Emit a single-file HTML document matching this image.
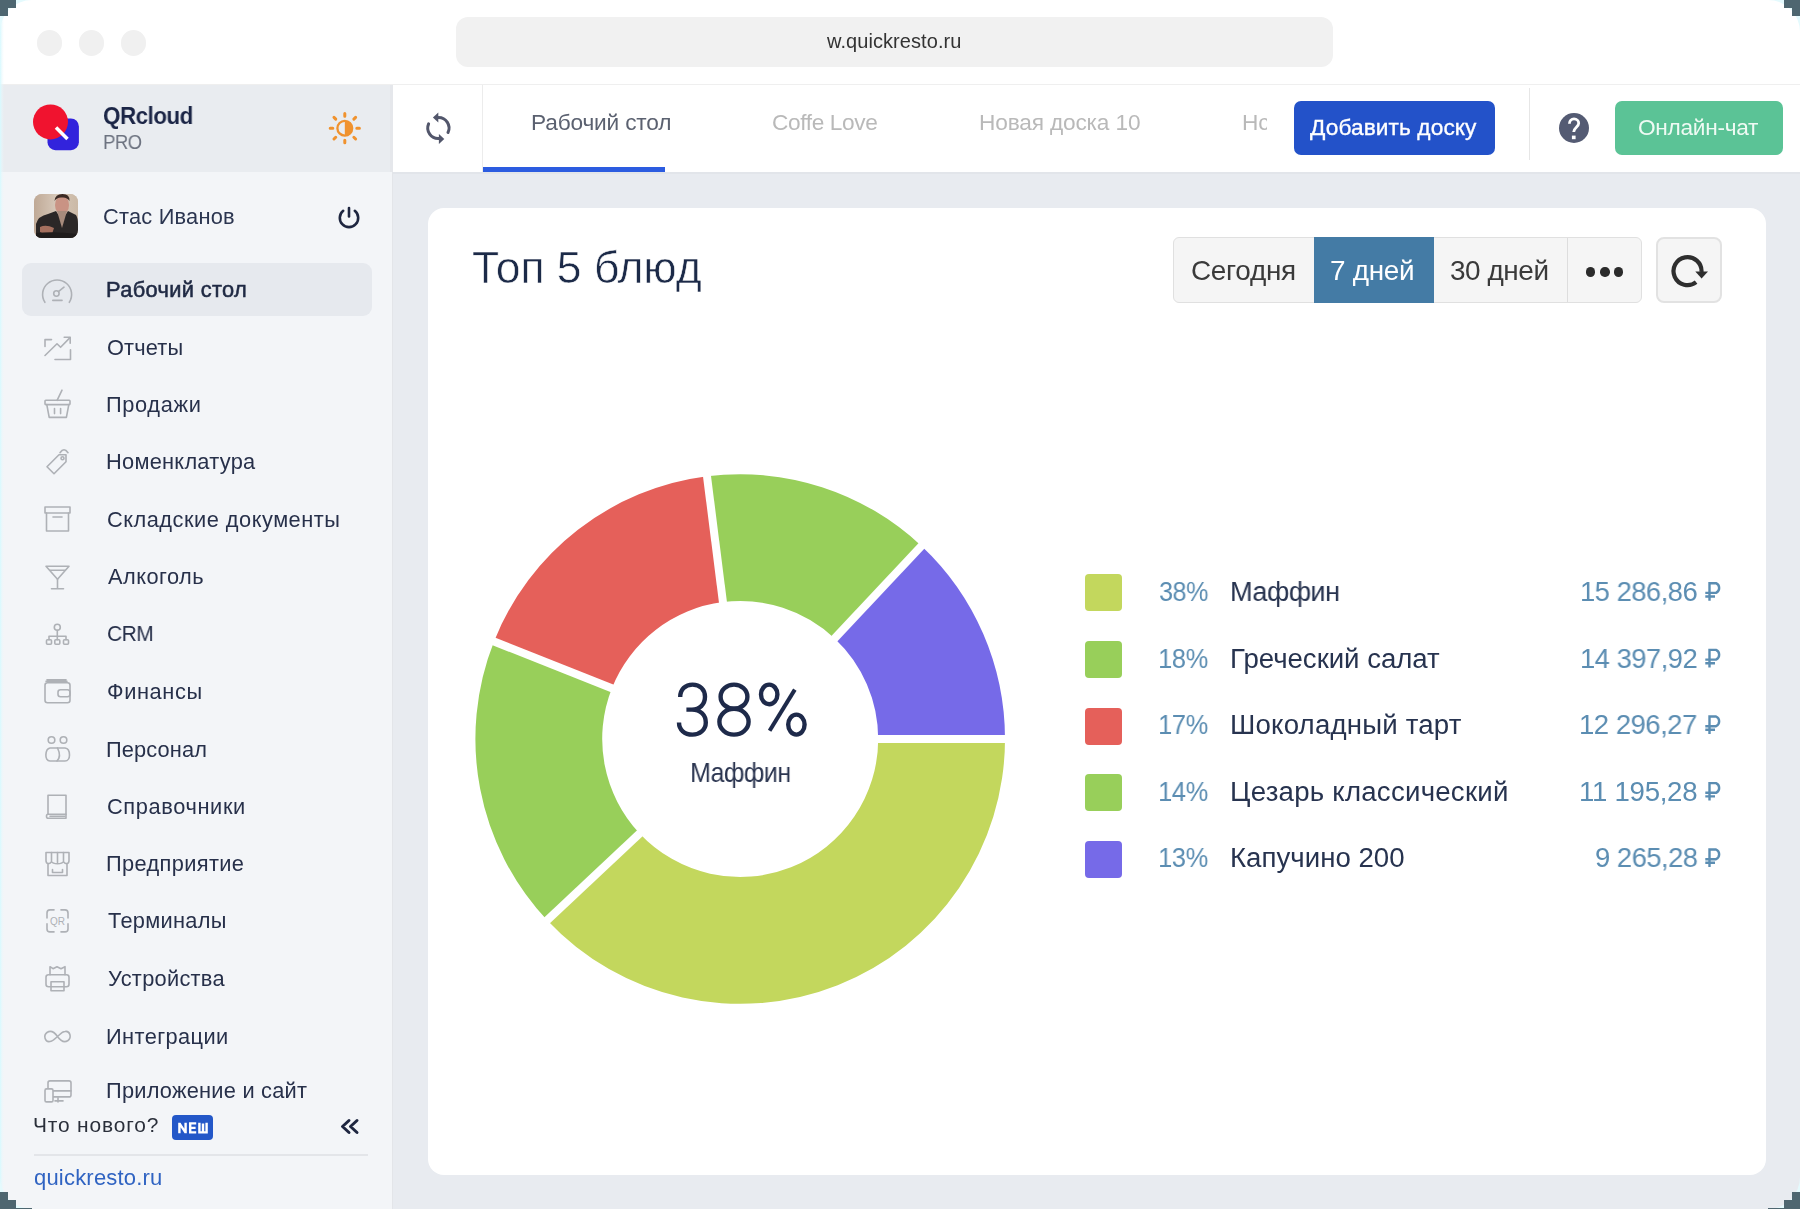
<!DOCTYPE html>
<html><head><meta charset="utf-8">
<style>
html,body{margin:0;padding:0;}
body{width:1800px;height:1209px;overflow:hidden;position:relative;background:#ffffff;font-family:"Liberation Sans",sans-serif;}
.abs{position:absolute;}
.tx{position:absolute;white-space:nowrap;line-height:1;will-change:transform;}
.big{-webkit-text-stroke:2px #ffffff;paint-order:normal;}
</style></head><body>
<!-- chrome -->
<div class="abs" style="left:0;top:0;width:1800px;height:85px;background:#ffffff;"></div>
<div class="abs" style="left:0;top:84px;width:1800px;height:1px;background:#efefef;"></div>
<div class="abs" style="left:36.7px;top:30px;width:25.6px;height:25.6px;border-radius:50%;background:#f0f0f0;"></div>
<div class="abs" style="left:78.9px;top:30px;width:25.6px;height:25.6px;border-radius:50%;background:#f0f0f0;"></div>
<div class="abs" style="left:120.9px;top:30px;width:25.6px;height:25.6px;border-radius:50%;background:#f0f0f0;"></div>
<div class="abs" style="left:456px;top:17px;width:877px;height:50px;border-radius:12px;background:#f1f1f1;"></div>
<!-- sidebar -->
<div class="abs" style="left:0;top:85px;width:393px;height:87px;background:#e9ecf0;"></div>
<div class="abs" style="left:0;top:172px;width:392px;height:1037px;background:#f3f5f8;"></div>
<div class="abs" style="left:392px;top:172px;width:2px;height:1037px;background:#e3e5e9;"></div>
<div class="abs" style="left:390px;top:85px;width:3px;height:87px;background:#e5e7eb;"></div>
<!-- logo -->
<svg class="abs" style="left:0;top:85px" width="393" height="87">
 <rect x="47.5" y="33.5" width="31.4" height="31.7" rx="8" fill="#3223dc"/>
 <circle cx="50.5" cy="36.9" r="17.5" fill="#f0132f"/>
 <line x1="56" y1="42.5" x2="67.5" y2="54" stroke="#ffffff" stroke-width="3.6"/>
</svg>
<!-- sun -->
<svg class="abs" style="left:0;top:0" width="393" height="200" stroke="#f0922e" stroke-linecap="round">
 <circle cx="344.8" cy="128.2" r="7.4" fill="none" stroke-width="2.3"/>
 <path d="M344.8 120.8 A7.4 7.4 0 0 1 344.8 135.6 Z" fill="#f0922e" stroke="none"/>
 <path d="M356.80 128.20 L359.40 128.20 M353.85 137.25 L355.62 139.02 M344.80 140.20 L344.80 142.80 M335.75 137.25 L333.98 139.02 M332.80 128.20 L330.20 128.20 M335.75 119.15 L333.98 117.38 M344.80 116.20 L344.80 113.60 M353.85 119.15 L355.62 117.38" stroke-width="3"/>
</svg>
<!-- avatar -->
<div class="abs" style="left:34px;top:194px;width:44px;height:44px;border-radius:8px;overflow:hidden;background:#cdbcab;">
<svg width="44" height="44" style="display:block">
 <defs><linearGradient id="avbg" x1="0" y1="0" x2="1" y2="0"><stop offset="0" stop-color="#bfa996"/><stop offset="0.5" stop-color="#d6c7b8"/><stop offset="1" stop-color="#cbb9a6"/></linearGradient></defs>
 <rect width="44" height="44" fill="url(#avbg)"/>
 <ellipse cx="28" cy="11" rx="7" ry="9.5" fill="#c99384"/>
 <path d="M20.5 7 Q21 0 28.5 0 Q36 0 35.5 7 Q33 3 28 3.5 Q23 3 20.5 7 Z" fill="#3b2a24"/>
 <path d="M2 44 V30 Q4 22 14 20 L22 17 L28 26 L34 17 L42 21 Q44 24 44 30 V44 Z" fill="#2b2727"/>
 <path d="M23 17 L33 17 L28 34 Z" fill="#a88b7c"/>
 <path d="M6 33 Q12 30 20 34 L18 40 Q10 41 6 38 Z" fill="#a5705f"/>
 <path d="M2 44 V39 Q20 37 44 40 V44 Z" fill="#1f1c1c"/>
</svg>
</div>
<!-- power -->
<svg class="abs" style="left:0;top:0" width="393" height="260" fill="none" stroke="#1e2640" stroke-width="2.6" stroke-linecap="round">
 <path d="M343.2 210.8 A9.2 9.2 0 1 0 354.8 210.8"/>
 <path d="M349 208 V216.5"/>
</svg>
<!-- active item -->
<div class="abs" style="left:22.4px;top:263px;width:349.2px;height:53.4px;border-radius:9px;background:#e6e9ee;"></div>
<svg class="abs" style="left:0;top:0" width="393" height="1209" fill="none" stroke="#aeb1b6" stroke-width="1.6" stroke-linecap="round" stroke-linejoin="round"><path d="M44.9 302.3 A14.5 14.5 0 1 1 69.3 302.3" fill="none"/><circle cx="56.4" cy="293.5" r="2.7" fill="none"/><path d="M58.4 291.6 L64 287.2"/><path d="M52.8 300.4 H62"/><path d="M45 346.4 V339.6 H51.5"/><path d="M55 359.5 H70.5 V349.8"/><path d="M45 355.5 L57 343.8 L60.6 347.3 L70 337.6"/><path d="M64.2 337.2 H70.2 V343.2"/><rect x="45" y="400.3" width="25" height="4.3" rx="0.8" fill="none"/><path d="M46.8 404.6 L49.2 417.4 H66.4 L68.8 404.6"/><path d="M54.5 408.6 V413.6 M60.6 408.6 V413.6"/><path d="M57.1 400.3 L62 390.2"/><path d="M47 466.7 L59 454.7 L66 454.7 L66 461.7 L54 473.7 Z" fill="none" transform="rotate(0)"/><circle cx="62.5" cy="458.2" r="1.5" fill="none"/><path d="M60 452.7 Q64 446.7 68 452.7"/><rect x="45" y="507.0" width="25" height="6" fill="none"/><path d="M46.5 513.0 V531.0 H68.5 V513.0"/><path d="M53 517.0 H62"/><path d="M46 566.3 H69 L57.5 579.3 Z" fill="none"/><path d="M50 570.3 H65"/><path d="M57.5 579.3 V588.3 M51.5 588.8 H63.5"/><circle cx="57.3" cy="627.3" r="3" fill="none"/><path d="M57.3 630.3 V636.3 M49 639.8 V636.3 H66 V639.8 M57.3 636.3 V639.8"/><rect x="46.5" y="639.8" width="5" height="4.5" rx="1" fill="none"/><rect x="54.8" y="639.8" width="5" height="4.5" rx="1" fill="none"/><rect x="63.5" y="639.8" width="5" height="4.5" rx="1" fill="none"/><rect x="45" y="682.7" width="25" height="20" rx="2.5" fill="none"/><path d="M47 679.7 H66 M46 681.2 H67"/><rect x="58" y="689.7" width="12" height="7" rx="2.5" fill="none"/><circle cx="51.5" cy="740.0" r="3.3" fill="none"/><circle cx="63.5" cy="740.0" r="3.3" fill="none"/><path d="M50 761.0 C44 761.0 45 749.0 50 748.0 H65 C71 749.0 71 761.0 65 761.0 Z" fill="none"/><path d="M57.5 748.0 C60 753.0 60 758.0 57 761.0"/><path d="M48 814.3 V795.3 H66 V814.3 Z" fill="none"/><path d="M48 814.3 C46 814.3 46 818.3 48 818.3 H66 V814.3" fill="none"/><path d="M50 816.3 H65"/><path d="M46 852.5 H69 V860.5 C69 864.5 65 864.5 63.5 861.5 C62 864.5 53 864.5 51.5 861.5 C50 864.5 46 864.5 46 860.5 Z" fill="none"/><path d="M51.5 852.5 V860.5 M57.5 852.5 V862.5 M63.5 852.5 V860.5"/><path d="M48 864.5 V875.5 H67 V864.5"/><path d="M52.5 869.5 V872.5 H62.5 V869.5"/><path d="M47 917.9 V912.9 Q47 909.9 50 909.9 H54 M61 909.9 H65 Q68 909.9 68 912.9 V917.9 M68 923.9 V928.9 Q68 931.9 65 931.9 H61 M54 931.9 H50 Q47 931.9 47 928.9 V923.9"/><text x="57.5" y="924.9" font-size="10" text-anchor="middle" fill="#aeb1b6" stroke="none" font-family="Liberation Sans">QR</text><path d="M50 974.7 V966.7 L53 968.7 L57 966.7 L61 968.7 L65 966.7 V974.7" fill="none"/><rect x="46" y="974.7" width="23" height="12" rx="2.5" fill="none"/><rect x="51" y="981.7" width="13" height="9" fill="none"/><path d="M57.5 1036.5 C54 1031.5 50 1030.5 47 1032.5 C43 1035.5 45 1042.5 50 1041.5 C53 1041.5 55 1038.5 57.5 1036.5 C60 1034.5 62 1031.5 65 1031.5 C70 1030.5 72 1037.5 68 1040.5 C65 1042.5 61 1041.5 57.5 1036.5 Z" fill="none"/><rect x="48" y="1080.9" width="23" height="16" rx="2" fill="none"/><path d="M50 1090.9 H71"/><rect x="45" y="1088.9" width="8" height="13" rx="1.5" fill="#f3f5f8"/><path d="M55 1100.9 H63 M58 1097.9 V1101.9"/></svg>
<!-- NEW badge -->
<div class="abs" style="left:172.4px;top:1115px;width:40.6px;height:24.6px;border-radius:4px;background:#2357c8;"></div>
<svg class="abs" style="left:0;top:0" width="393" height="1209" fill="none" stroke="#ffffff" stroke-width="2.4" stroke-linejoin="miter">
 <path d="M179.4 1133.2 V1122.8 M179.6 1123.6 L185.4 1132.4 M185.6 1133.2 V1122.8" stroke-linejoin="bevel"/>
 <path d="M196.2 1123.4 H190.2 V1132.4 H196.2 M190.2 1127.9 H195.6"/>
 <path d="M199.4 1122.8 V1132.4 H206.6 V1122.8 M203 1123.5 V1132.4"/>
</svg>
<svg class="abs" style="left:0;top:0" width="393" height="1209" fill="none" stroke="#1e2640" stroke-width="3" stroke-linecap="round" stroke-linejoin="round">
 <path d="M349 1120.5 L342.5 1126.5 L349 1132.5 M357 1120.5 L350.5 1126.5 L357 1132.5"/>
</svg>
<div class="abs" style="left:34px;top:1154px;width:334px;height:2px;background:#e3e5e9;"></div>
<!-- top nav -->
<div class="abs" style="left:393px;top:85px;width:1407px;height:87px;background:#ffffff;"></div>
<div class="abs" style="left:482px;top:85px;width:1px;height:87px;background:#ececec;"></div>
<div class="abs" style="left:483px;top:167px;width:182px;height:5px;background:#2c5ce0;"></div>
<svg class="abs" style="left:393px;top:85px" width="89" height="87" fill="none" stroke="#52566b" stroke-width="3" stroke-linecap="round">
 <path d="M45.5 32.5 A10.5 10.5 0 0 1 55 47.5"/>
 <path d="M35.6 38.9 A10.5 10.5 0 0 0 46 53.5"/>
 <path d="M39.9 32.6 L45.3 27.6 L45.3 37.6 Z" fill="#52566b" stroke="none"/>
 <path d="M51.3 54 L45.9 49 L45.9 59 Z" fill="#52566b" stroke="none"/>
</svg>
<div class="abs" style="left:1294px;top:101.3px;width:200.5px;height:53.7px;border-radius:7px;background:#2352c9;"></div>
<div class="abs" style="left:1529px;top:88px;width:1px;height:72px;background:#e6e6e6;"></div>
<div class="abs" style="left:1558.8px;top:113.1px;width:30.4px;height:30.4px;border-radius:50%;background:#545b73;"></div>
<svg class="abs" style="left:0;top:0" width="1800" height="200" fill="none" stroke="#ffffff" stroke-width="2.8">
 <path d="M1569.4 123.8 C1569.4 120.6 1571.5 118.9 1574 118.9 C1576.8 118.9 1578.7 120.8 1578.7 123.2 C1578.7 126.9 1573.7 127.6 1573.7 132"/>
 <rect x="1571.9" y="135.6" width="3.7" height="3.6" fill="#ffffff" stroke="none"/>
</svg>
<div class="abs" style="left:1614.8px;top:101.3px;width:168.3px;height:53.7px;border-radius:7px;background:#5bc396;"></div>
<div class="abs" style="left:1268px;top:100px;width:20px;height:50px;background:#ffffff;"></div>
<!-- main -->
<div class="abs" style="left:393px;top:172px;width:1407px;height:1037px;background:#e8ebf0;"></div>
<div class="abs" style="left:393px;top:172px;width:1407px;height:2px;background:#e2e5ea;"></div>
<div class="abs" style="left:427.7px;top:208px;width:1338.6px;height:966.8px;border-radius:16px;background:#ffffff;"></div>
<!-- segmented -->
<div class="abs" style="left:1172.5px;top:237px;width:469.7px;height:66px;border-radius:6px;background:#f5f5f5;box-sizing:border-box;border:1.5px solid #e0e0e0;"></div>
<div class="abs" style="left:1314.2px;top:237px;width:119.5px;height:66px;background:#447ba5;"></div>
<div class="abs" style="left:1567px;top:238px;width:1px;height:64px;background:#dddddd;"></div>
<div class="abs" style="left:1586px;top:267.4px;width:9.4px;height:9.4px;border-radius:50%;background:#2b2b2b;"></div>
<div class="abs" style="left:1600.2px;top:267.4px;width:9.4px;height:9.4px;border-radius:50%;background:#2b2b2b;"></div>
<div class="abs" style="left:1614.1px;top:267.4px;width:9.4px;height:9.4px;border-radius:50%;background:#2b2b2b;"></div>
<div class="abs" style="left:1656.4px;top:237.4px;width:65.4px;height:65.2px;border-radius:8px;background:#f5f5f5;box-sizing:border-box;border:2px solid #e2e2e2;"></div>
<svg class="abs" style="left:1656px;top:237px" width="66" height="66" fill="none" stroke="#2e2e2e" stroke-width="4.2">
 <path d="M45.5 35 A14 14 0 1 0 40.1 45.2"/>
 <path d="M39.3 34.4 H52 L45.6 41.6 Z" fill="#2e2e2e" stroke="none"/>
</svg>
<svg class="abs" style="left:0;top:0" width="1800" height="1209"><path d="M1005.00 739.00 A264.8 264.8 0 0 1 547.17 920.27 L639.60 833.47 A138.0 138.0 0 0 0 878.20 739.00 Z" fill="#c3d75d"/><path d="M547.17 920.27 A264.8 264.8 0 0 1 494.00 641.52 L611.89 688.20 A138.0 138.0 0 0 0 639.60 833.47 Z" fill="#98cf5a"/><path d="M494.00 641.52 A264.8 264.8 0 0 1 707.01 476.29 L722.90 602.09 A138.0 138.0 0 0 0 611.89 688.20 Z" fill="#e5605a"/><path d="M707.01 476.29 A264.8 264.8 0 0 1 921.47 545.97 L834.67 638.40 A138.0 138.0 0 0 0 722.90 602.09 Z" fill="#98cf5a"/><path d="M921.47 545.97 A264.8 264.8 0 0 1 1005.00 739.00 L878.20 739.00 A138.0 138.0 0 0 0 834.67 638.40 Z" fill="#766ae8"/><line x1="874.20" y1="739.00" x2="1009.00" y2="739.00" stroke="#fff" stroke-width="8"/><line x1="642.52" y1="830.73" x2="544.25" y2="923.01" stroke="#fff" stroke-width="8"/><line x1="615.61" y1="689.67" x2="490.28" y2="640.05" stroke="#fff" stroke-width="8"/><line x1="723.41" y1="606.06" x2="706.51" y2="472.32" stroke="#fff" stroke-width="8"/><line x1="831.93" y1="641.32" x2="924.21" y2="543.05" stroke="#fff" stroke-width="8"/></svg>
<svg class="abs" style="left:0;top:0" width="1800" height="1209"><path d="M1709.5 600.7 V583.2 H1716 A5.3 5.3 0 0 1 1716 592.9 H1705.3 M1705.3 596.5 H1715" fill="none" stroke="#5b8db2" stroke-width="2.4"/><path d="M1709.5 667.4 V649.9 H1716 A5.3 5.3 0 0 1 1716 659.6 H1705.3 M1705.3 663.2 H1715" fill="none" stroke="#5b8db2" stroke-width="2.4"/><path d="M1709.5 734.0 V716.5 H1716 A5.3 5.3 0 0 1 1716 726.2 H1705.3 M1705.3 729.8 H1715" fill="none" stroke="#5b8db2" stroke-width="2.4"/><path d="M1709.5 800.6 V783.1 H1716 A5.3 5.3 0 0 1 1716 792.8 H1705.3 M1705.3 796.4 H1715" fill="none" stroke="#5b8db2" stroke-width="2.4"/><path d="M1709.5 867.0 V849.5 H1716 A5.3 5.3 0 0 1 1716 859.2 H1705.3 M1705.3 862.8 H1715" fill="none" stroke="#5b8db2" stroke-width="2.4"/></svg>
<svg class="abs" style="left:0;top:0" width="1000" height="1000" fill="none" stroke="#1e2a4a" stroke-width="4.4">
 <path d="M680.2 697 C680.2 689 685.5 684.6 692.5 684.6 C700 684.6 705 689.5 705 696.8 C705 704.5 699.5 709.6 692 709.6 L686.4 709.6 M692 709.6 C700.5 709.6 705.8 715 705.8 722.5 C705.8 730 699.5 734.6 692.5 734.6 C684.5 734.6 679 729.8 679 722.5"/>
 <ellipse cx="734" cy="696.7" rx="13.4" ry="12.1"/>
 <ellipse cx="734" cy="721.7" rx="14.6" ry="12.9"/>
 <ellipse cx="769.2" cy="694.4" rx="8.2" ry="9.8"/>
 <ellipse cx="796.4" cy="724.6" rx="8.2" ry="10"/>
 <path d="M794.8 689.6 L769.6 730.8" stroke-width="4"/>
</svg>
<!-- legend squares -->
<div class="abs" style="left:1084.8px;top:574px;width:37px;height:37px;border-radius:4px;background:#c3d75d;"></div>
<div class="abs" style="left:1084.8px;top:640.9px;width:37px;height:37px;border-radius:4px;background:#98cf5a;"></div>
<div class="abs" style="left:1084.8px;top:707.5px;width:37px;height:37px;border-radius:4px;background:#e5605a;"></div>
<div class="abs" style="left:1084.8px;top:774.1px;width:37px;height:37px;border-radius:4px;background:#98cf5a;"></div>
<div class="abs" style="left:1084.8px;top:840.5px;width:37px;height:37px;border-radius:4px;background:#766ae8;"></div>
<div class="tx" style="left:827.10px;top:31.17px;font-size:20.00px;letter-spacing:0.074px;color:#333333;">w.quickresto.ru</div>
<div class="tx" style="left:102.90px;top:104.09px;font-size:23.98px;letter-spacing:-0.500px;color:#1b2546;font-weight:bold;transform:scaleX(0.9315);transform-origin:0.90px 0;">QRcloud</div>
<div class="tx" style="left:103.20px;top:132.81px;font-size:19.48px;letter-spacing:-0.500px;color:#6d7380;transform:scaleX(0.9471);transform-origin:1.50px 0;">PRO</div>
<div class="tx" style="left:102.90px;top:206.04px;font-size:21.80px;letter-spacing:0.214px;color:#2b3550;">Стас Иванов</div>
<div class="tx" style="left:106.30px;top:279.04px;font-size:21.80px;letter-spacing:0.351px;color:#1f2943;-webkit-text-stroke:0.55px #1f2943;">Рабочий стол</div>
<div class="tx" style="left:107.00px;top:336.74px;font-size:21.80px;letter-spacing:0.142px;color:#27304a;">Отчеты</div>
<div class="tx" style="left:106.30px;top:393.84px;font-size:21.80px;letter-spacing:0.638px;color:#27304a;">Продажи</div>
<div class="tx" style="left:106.30px;top:451.24px;font-size:21.80px;letter-spacing:0.265px;color:#27304a;">Номенклатура</div>
<div class="tx" style="left:106.90px;top:508.54px;font-size:21.80px;letter-spacing:0.499px;color:#27304a;">Складские документы</div>
<div class="tx" style="left:108.00px;top:565.84px;font-size:21.80px;letter-spacing:0.470px;color:#27304a;">Алкоголь</div>
<div class="tx" style="left:106.90px;top:623.34px;font-size:21.80px;letter-spacing:-0.500px;color:#27304a;transform:scaleX(0.9588);transform-origin:1.10px 0;">CRM</div>
<div class="tx" style="left:106.80px;top:681.24px;font-size:21.80px;letter-spacing:0.590px;color:#27304a;">Финансы</div>
<div class="tx" style="left:106.30px;top:738.54px;font-size:21.80px;letter-spacing:0.135px;color:#27304a;">Персонал</div>
<div class="tx" style="left:106.90px;top:795.84px;font-size:21.80px;letter-spacing:0.620px;color:#27304a;">Справочники</div>
<div class="tx" style="left:106.30px;top:853.04px;font-size:21.80px;letter-spacing:0.356px;color:#27304a;">Предприятие</div>
<div class="tx" style="left:107.60px;top:910.44px;font-size:21.80px;letter-spacing:0.288px;color:#27304a;">Терминалы</div>
<div class="tx" style="left:107.50px;top:968.24px;font-size:21.80px;letter-spacing:0.286px;color:#27304a;">Устройства</div>
<div class="tx" style="left:106.30px;top:1026.04px;font-size:21.80px;letter-spacing:0.395px;color:#27304a;">Интеграции</div>
<div class="tx" style="left:106.30px;top:1080.44px;font-size:21.80px;letter-spacing:0.227px;color:#27304a;">Приложение и сайт</div>
<div class="tx" style="left:33.40px;top:1115.18px;font-size:20.93px;letter-spacing:0.841px;color:#2a2f3a;">Что нового?</div>
<div class="tx" style="left:34.10px;top:1166.87px;font-size:22.00px;letter-spacing:0.199px;color:#2f63c2;">quickresto.ru</div>
<div class="tx" style="left:531.30px;top:111.30px;font-size:22.67px;letter-spacing:-0.164px;color:#5b6170;">Рабочий стол</div>
<div class="tx" style="left:772.20px;top:111.30px;font-size:22.67px;letter-spacing:-0.371px;color:#b9b9b9;">Coffe Love</div>
<div class="tx" style="left:978.60px;top:111.20px;font-size:22.67px;letter-spacing:-0.160px;color:#b9b9b9;">Новая доска 10</div>
<div class="tx" style="left:1241.50px;top:111.20px;font-size:22.67px;letter-spacing:0.000px;color:#b9b9b9;width:24.5px;overflow:hidden;height:26px;">Нс</div>
<div class="tx" style="left:1310.20px;top:115.80px;font-size:22.67px;letter-spacing:0.104px;color:#ffffff;-webkit-text-stroke:0.35px #ffffff;">Добавить доску</div>
<div class="tx" style="left:1637.90px;top:116.10px;font-size:22.67px;letter-spacing:-0.273px;color:#eefaf3;">Онлайн-чат</div>
<div class="tx" style="left:472.01px;top:246.14px;font-size:44.48px;letter-spacing:0.001px;color:#1c2a48;-webkit-text-stroke:0.6px #ffffff;">Топ 5 блюд</div>
<div class="tx" style="left:1190.69px;top:256.77px;font-size:27.91px;letter-spacing:-0.309px;color:#3a3a3a;">Сегодня</div>
<div class="tx" style="left:1330.39px;top:256.77px;font-size:27.91px;letter-spacing:-0.307px;color:#ffffff;">7 дней</div>
<div class="tx" style="left:1450.23px;top:256.77px;font-size:27.91px;letter-spacing:-0.432px;color:#3a3a3a;">30 дней</div>
<div class="tx" style="left:690.19px;top:760.21px;font-size:27.04px;letter-spacing:-0.500px;color:#2b3550;transform:scaleX(0.9185);transform-origin:2.11px 0;">Маффин</div>
<div class="tx" style="left:1159.34px;top:577.82px;font-size:27.62px;letter-spacing:-0.500px;color:#5b8db2;transform:scaleX(0.9090);transform-origin:0.86px 0;">38%</div>
<div class="tx" style="left:1229.54px;top:577.82px;font-size:27.62px;letter-spacing:-0.500px;color:#27334f;transform:scaleX(0.9800);transform-origin:2.16px 0;">Маффин</div>
<div class="tx amt" style="left:1580.07px;top:577.82px;font-size:27.62px;letter-spacing:-0.500px;color:#5b8db2;transform:scaleX(0.9904);transform-origin:1.73px 0;">15 286,86</div>
<div class="tx" style="left:1158.47px;top:644.52px;font-size:27.62px;letter-spacing:-0.500px;color:#5b8db2;transform:scaleX(0.9241);transform-origin:1.73px 0;">18%</div>
<div class="tx" style="left:1229.54px;top:644.52px;font-size:27.62px;letter-spacing:-0.018px;color:#27334f;">Греческий салат</div>
<div class="tx amt" style="left:1580.07px;top:644.52px;font-size:27.62px;letter-spacing:-0.500px;color:#5b8db2;transform:scaleX(0.9904);transform-origin:1.73px 0;">14 397,92</div>
<div class="tx" style="left:1158.47px;top:711.12px;font-size:27.62px;letter-spacing:-0.500px;color:#5b8db2;transform:scaleX(0.9241);transform-origin:1.73px 0;">17%</div>
<div class="tx" style="left:1229.54px;top:711.12px;font-size:27.62px;letter-spacing:0.200px;color:#27334f;">Шоколадный тарт</div>
<div class="tx amt" style="left:1579.47px;top:711.12px;font-size:27.62px;letter-spacing:-0.500px;color:#5b8db2;transform:scaleX(0.9956);transform-origin:1.73px 0;">12 296,27</div>
<div class="tx" style="left:1158.47px;top:777.72px;font-size:27.62px;letter-spacing:-0.500px;color:#5b8db2;transform:scaleX(0.9241);transform-origin:1.73px 0;">14%</div>
<div class="tx" style="left:1229.54px;top:777.72px;font-size:27.62px;letter-spacing:0.242px;color:#27334f;">Цезарь классический</div>
<div class="tx amt" style="left:1579.27px;top:777.72px;font-size:27.62px;letter-spacing:-0.283px;color:#5b8db2;">11 195,28</div>
<div class="tx" style="left:1158.47px;top:844.12px;font-size:27.62px;letter-spacing:-0.500px;color:#5b8db2;transform:scaleX(0.9241);transform-origin:1.73px 0;">13%</div>
<div class="tx" style="left:1229.54px;top:844.12px;font-size:27.62px;letter-spacing:0.024px;color:#27334f;">Капучино 200</div>
<div class="tx amt" style="left:1594.71px;top:844.12px;font-size:27.62px;letter-spacing:-0.500px;color:#5b8db2;transform:scaleX(0.9913);transform-origin:1.29px 0;">9 265,28</div>
<!-- corners -->
<div class="abs" style="left:0;top:0;width:4px;height:1209px;background:linear-gradient(to right,rgba(215,250,255,1),rgba(230,248,252,0.5) 50%,rgba(243,245,248,0));"></div>
<svg class="abs" style="left:0;top:0" width="1800" height="1209" fill="#e4fafd" stroke="none">
 <path d="M0 0 H32 A32 32 0 0 0 0 32 Z"/>
 <path d="M1800 0 H1768 A32 32 0 0 1 1800 32 Z"/>
 <path d="M0 1209 H32 A32 32 0 0 1 0 1177 Z"/>
 <path d="M1800 1209 H1768 A32 32 0 0 0 1800 1177 Z"/>
</svg>
<div class="abs" style="left:0;top:0;width:16px;height:8px;background:#4e6670;"></div>
<div class="abs" style="left:0;top:8px;width:8px;height:8px;background:#4e6670;"></div>
<div class="abs" style="left:1784px;top:0;width:16px;height:8px;background:#4e6670;"></div>
<div class="abs" style="left:1792px;top:8px;width:8px;height:8px;background:#4e6670;"></div>
<div class="abs" style="left:0;top:1192px;width:8px;height:17px;background:#4e6670;"></div>
<div class="abs" style="left:8px;top:1200px;width:8px;height:9px;background:#4e6670;"></div>
<div class="abs" style="left:16px;top:1208px;width:16px;height:1px;background:#4e6670;"></div>
<div class="abs" style="left:1792px;top:1192px;width:8px;height:17px;background:#4e6670;"></div>
<div class="abs" style="left:1784px;top:1200px;width:8px;height:9px;background:#4e6670;"></div>
<div class="abs" style="left:1768px;top:1208px;width:16px;height:1px;background:#4e6670;"></div>
</body></html>
